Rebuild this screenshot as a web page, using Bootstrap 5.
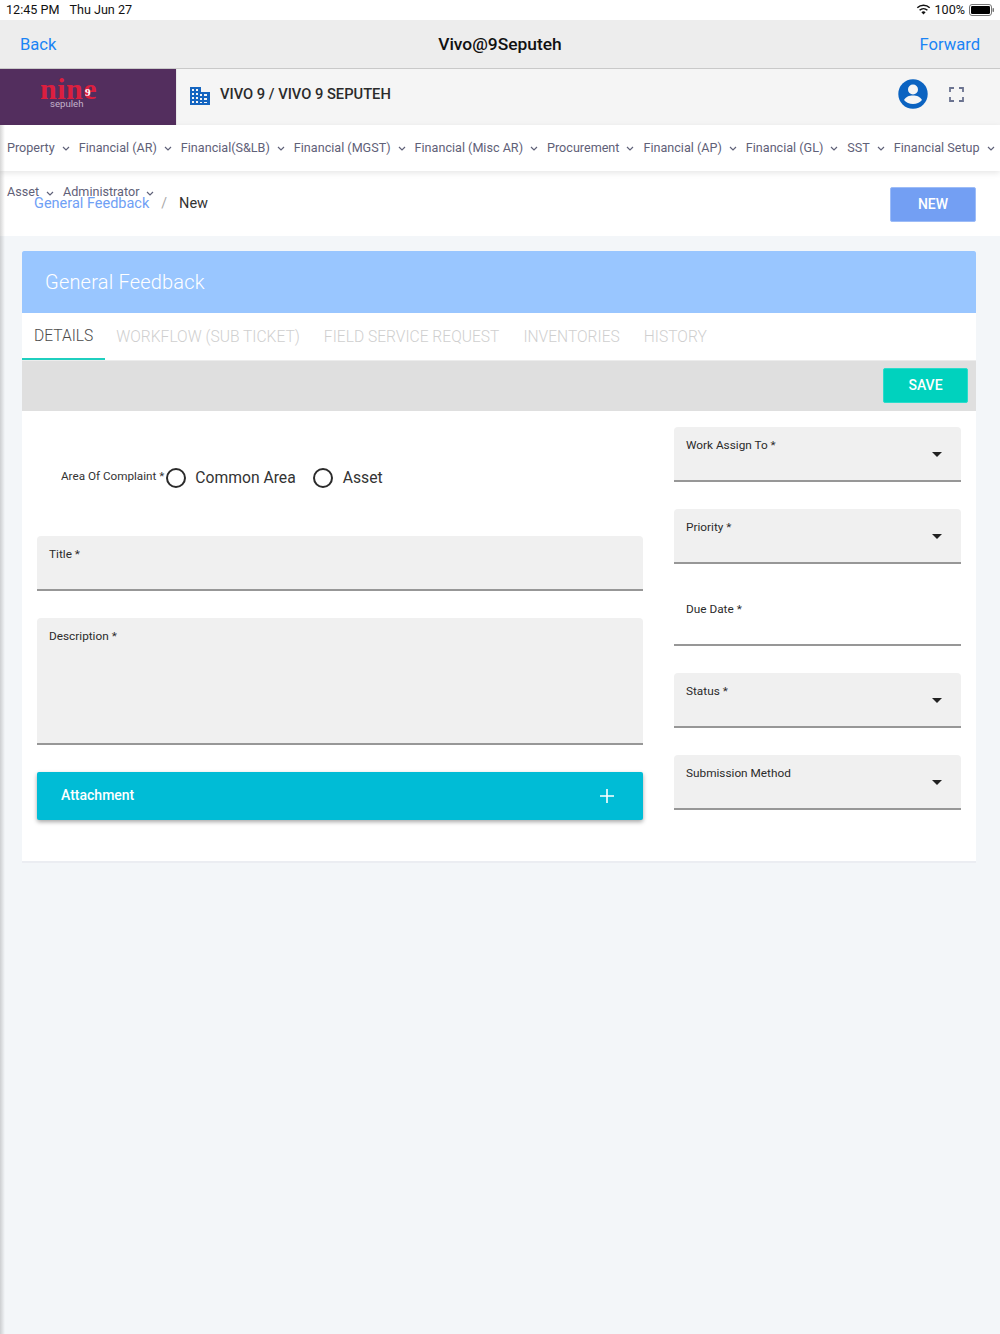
<!DOCTYPE html>
<html lang="en">
<head>
<meta charset="utf-8">
<title>General Feedback</title>
<link href="https://cdn.jsdelivr.net/npm/bootstrap@5.3.0/dist/css/bootstrap.min.css" rel="stylesheet">
<style>
html,body{height:100%}
body{background:#f3f6f9;font-family:Roboto,"Liberation Sans",sans-serif;color:#212529;width:1000px;height:1334px;overflow:hidden;position:relative}
.edge-shade{position:absolute;left:0;top:125px;bottom:0;width:5px;background:linear-gradient(90deg,rgba(0,0,0,.16),rgba(0,0,0,0));pointer-events:none;z-index:5}
.status-bar{height:20px;background:#fff;font-size:12.6px;padding:0 5px 0 6px;color:#111}
.status-time{margin-right:10px}
.safari-bar{height:49px;background:#ededed;border-bottom:1px solid #c9c9c9;padding:2px 20px 0;font-size:16.6px}
.safari-link{color:#1a84f5;text-decoration:none}
.safari-title{font-weight:500;font-size:17.4px;color:#111;position:absolute;left:0;right:0;top:14px;line-height:20px;text-align:center}
.top-head{height:56px;background:#f5f5f5}
.logo-box{width:177px;background:#532e5e;height:100%;position:relative;border-right:1px solid #e8e8e8;overflow:hidden}
.logo-word{position:absolute;left:40px;top:1px;font-family:"Liberation Serif",serif;font-size:30px;font-weight:700;color:#dc1f3f;line-height:38px;letter-spacing:.5px}
.logo-sub{position:absolute;left:50px;top:28px;font-size:9.6px;line-height:14px;color:#c3b2ca}
.logo-nine{position:absolute;left:85px;top:17px;font-family:"Liberation Serif",serif;font-size:11px;font-weight:700;color:#fff;line-height:12px}
.site-name{font-size:14.7px;font-weight:500;color:#2b2b2b;margin-left:10px;margin-top:-6px}
.site-icon{margin-left:13px;margin-top:-3px}
.head-tools{margin-left:auto;margin-right:36px;margin-top:-6px;gap:21px}
.menu-row{height:46px;background:#fff;padding:0 0 0 7px;box-shadow:0 2px 6px rgba(0,0,0,.1);position:relative;z-index:3;font-size:12.6px;color:#5f6178;white-space:nowrap;gap:9px}
.menu-item{display:inline-flex;align-items:center;gap:7px}
.menu-item svg{flex:none;margin-top:2px}
.menu-extra{position:absolute;left:7px;top:184px;z-index:4;font-size:12.6px;line-height:16px;color:#5f6178;gap:9px;white-space:nowrap}
.crumb-row{height:65px;background:#fff;padding:0 24px 0 34px;font-size:14.5px}
.crumb-link{color:#6fa0f5;text-decoration:none}
.crumb-sep{color:#a8a8a8;margin:0 12px;font-size:14px}
.crumb-now{color:#333}
.btn-new{width:86px;height:35px;background:#739ff3;color:#fff;font-size:14px;font-weight:500;border:1px solid #9dbcf7;border-radius:2px;padding:0;margin-top:1px}
.page-card{margin:15px 24px 0 22px;background:#fff;border-bottom:2px solid #ebedf2;height:612px}
.card-title-bar{height:62px;background:#99c6ff;color:#fff;font-size:20px;font-weight:300;padding-left:23px;letter-spacing:.2px;border-radius:2px 2px 0 0}
.tab-row{height:48px;background:#fff;font-size:15.6px;font-weight:300;color:#cfcfcf;border-bottom:1px solid #ececec}
.tab-cell{padding:2px 0 0;margin-right:24px;height:100%;display:flex;align-items:center}
.tab-cell.is-active{color:#4b4b4b;padding-left:12px;padding-right:12px;margin-right:11px;border-bottom:2px solid #1fcfbf}
.tool-row{height:50px;background:#dfdfdf;padding:0 8px 2px 0}
.btn-save{width:85px;height:35px;background:#00d2be;color:#fff;font-size:14px;font-weight:500;border:1px solid #2bdccb;border-radius:2px;padding:0}
.form-body{padding:16px 16px 0 15px;gap:31.5px}
.left-col{width:605.5px;flex:none}
.right-col{width:287px;flex:none}
.area-row{height:109px;padding:0 0 8px 24px;font-size:15.7px;color:#333}
.area-label{font-size:11.7px;color:#333;margin-top:-2px}
.radio-dot{width:20px;height:20px;border:2px solid #2b2b2b;border-radius:50%;display:inline-block;flex:none}
.radio-a{margin-left:2px;margin-right:9px}
.radio-b{margin-left:17px;margin-right:10px}
.fill-field{background:#f0f0f0;border-bottom:2px solid #979797;border-radius:4px 4px 0 0;height:55px;padding:10px 12px;font-size:11.8px;line-height:16px;color:#2b2b2b;margin-bottom:27px;position:relative}
.fill-field.is-plain{background:transparent}
.fill-field.is-tall{height:127px;margin-bottom:26.5px}
.caret-down{position:absolute;right:19px;top:25px;width:0;height:0;border-left:5px solid transparent;border-right:5px solid transparent;border-top:5px solid #222}
.attach-bar{background:#00bcd6;height:48px;color:#fff;font-size:14px;font-weight:500;padding:0 29px 0 24px;border-radius:2px;box-shadow:0 2px 4px rgba(0,0,0,.35)}
</style>
</head>
<body>
<div class="edge-shade"></div>

<div class="status-bar d-flex align-items-center">
  <span class="status-time">12:45 PM</span><span>Thu Jun 27</span>
  <span class="ms-auto d-flex align-items-center gap-1">
    <svg width="15" height="11" viewBox="0 0 15 11"><path d="M7.500 10.600 5.400 8.200a3.100 3.100 0 0 1 4.200 0Z" fill="#111"/><path d="M3.600 6.300a5.700 5.700 0 0 1 7.800 0" fill="none" stroke="#111" stroke-width="1.500"/><path d="M1.300 3.800a9 9 0 0 1 12.400 0" fill="none" stroke="#111" stroke-width="1.500"/></svg>
    <span>100%</span>
    <svg width="26" height="12" viewBox="0 0 26 12"><rect x=".5" y=".5" width="22" height="11" rx="2.500" fill="none" stroke="#777"/><rect x="2" y="2" width="19" height="8" rx="1.200" fill="#000"/><rect x="23.500" y="4" width="1.500" height="4" rx=".7" fill="#777"/></svg>
  </span>
</div>

<div class="safari-bar d-flex align-items-center justify-content-between position-relative">
  <a class="safari-link" href="#">Back</a>
  <span class="safari-title">Vivo@9Seputeh</span>
  <a class="safari-link position-relative" href="#">Forward</a>
</div>

<div class="top-head d-flex align-items-center">
  <div class="logo-box">
    <span class="logo-word">nine</span>
    <span class="logo-sub">sepuleh</span>
    <span class="logo-nine">9</span>
  </div>
  <svg class="site-icon" width="20" height="18" viewBox="0 0 20 18"><path fill="#1565c0" d="M0 0h11v5h9v13H0Z"/><g fill="#f5f5f5"><rect x="2" y="2" width="2" height="2"/><rect x="6" y="2" width="2" height="2"/><rect x="2" y="6" width="2" height="2"/><rect x="6" y="6" width="2" height="2"/><rect x="10" y="7" width="2" height="2"/><rect x="14" y="7" width="3" height="2"/><rect x="2" y="10" width="2" height="2"/><rect x="6" y="10" width="2" height="2"/><rect x="10" y="11" width="2" height="2"/><rect x="14" y="11" width="3" height="2"/><rect x="2" y="14" width="2" height="2"/><rect x="6" y="14" width="2" height="2"/><rect x="10" y="15" width="2" height="1"/><rect x="14" y="15" width="3" height="1"/></g></svg>
  <span class="site-name">VIVO 9 / VIVO 9 SEPUTEH</span>
  <div class="head-tools d-flex align-items-center">
    <svg width="30" height="30" viewBox="0 0 30 30"><circle cx="15" cy="15" r="14.700" fill="#0b63c1"/><circle cx="15" cy="10.500" r="5" fill="#f5f5f5"/><path d="M6 21c1.600-3.400 5.200-4.600 9-4.600s7.400 1.200 9 4.600c-2.200 2.800-5.400 4-9 4s-6.800-1.200-9-4Z" fill="#f5f5f5"/></svg>
    <svg width="15" height="15" viewBox="0 0 15 15"><path d="M1 5V1h4M10 1h4v4M14 10v4h-4M5 14H1v-4" fill="none" stroke="#6b7390" stroke-width="1.800"/></svg>
  </div>
</div>

<div class="menu-row d-flex align-items-center">
  <span class="menu-item">Property <svg width="8" height="5" viewBox="0 0 8 5"><path d="m1 1 3 3 3-3" fill="none" stroke="#5f6178" stroke-width="1.200"/></svg></span>
  <span class="menu-item">Financial (AR) <svg width="8" height="5" viewBox="0 0 8 5"><path d="m1 1 3 3 3-3" fill="none" stroke="#5f6178" stroke-width="1.200"/></svg></span>
  <span class="menu-item">Financial(S&amp;LB) <svg width="8" height="5" viewBox="0 0 8 5"><path d="m1 1 3 3 3-3" fill="none" stroke="#5f6178" stroke-width="1.200"/></svg></span>
  <span class="menu-item">Financial (MGST) <svg width="8" height="5" viewBox="0 0 8 5"><path d="m1 1 3 3 3-3" fill="none" stroke="#5f6178" stroke-width="1.200"/></svg></span>
  <span class="menu-item">Financial (Misc AR) <svg width="8" height="5" viewBox="0 0 8 5"><path d="m1 1 3 3 3-3" fill="none" stroke="#5f6178" stroke-width="1.200"/></svg></span>
  <span class="menu-item">Procurement <svg width="8" height="5" viewBox="0 0 8 5"><path d="m1 1 3 3 3-3" fill="none" stroke="#5f6178" stroke-width="1.200"/></svg></span>
  <span class="menu-item">Financial (AP) <svg width="8" height="5" viewBox="0 0 8 5"><path d="m1 1 3 3 3-3" fill="none" stroke="#5f6178" stroke-width="1.200"/></svg></span>
  <span class="menu-item">Financial (GL) <svg width="8" height="5" viewBox="0 0 8 5"><path d="m1 1 3 3 3-3" fill="none" stroke="#5f6178" stroke-width="1.200"/></svg></span>
  <span class="menu-item">SST <svg width="8" height="5" viewBox="0 0 8 5"><path d="m1 1 3 3 3-3" fill="none" stroke="#5f6178" stroke-width="1.200"/></svg></span>
  <span class="menu-item">Financial Setup <svg width="8" height="5" viewBox="0 0 8 5"><path d="m1 1 3 3 3-3" fill="none" stroke="#5f6178" stroke-width="1.200"/></svg></span>
</div>

<div class="menu-extra d-flex">
  <span class="menu-item">Asset <svg width="8" height="5" viewBox="0 0 8 5"><path d="m1 1 3 3 3-3" fill="none" stroke="#5f6178" stroke-width="1.200"/></svg></span>
  <span class="menu-item">Administrator <svg width="8" height="5" viewBox="0 0 8 5"><path d="m1 1 3 3 3-3" fill="none" stroke="#5f6178" stroke-width="1.200"/></svg></span>
</div>

<div class="crumb-row d-flex align-items-center">
  <a class="crumb-link" href="#">General Feedback</a>
  <span class="crumb-sep">/</span>
  <span class="crumb-now">New</span>
  <button class="btn btn-new ms-auto" type="button">NEW</button>
</div>

<div class="page-card">
  <div class="card-title-bar d-flex align-items-center">General Feedback</div>
  <div class="tab-row d-flex">
    <div class="tab-cell is-active">DETAILS</div>
    <div class="tab-cell">WORKFLOW (SUB TICKET)</div>
    <div class="tab-cell">FIELD SERVICE REQUEST</div>
    <div class="tab-cell">INVENTORIES</div>
    <div class="tab-cell">HISTORY</div>
  </div>
  <div class="tool-row d-flex align-items-center justify-content-end">
    <button class="btn btn-save" type="button">SAVE</button>
  </div>
  <div class="form-body d-flex">
    <div class="left-col">
      <div class="area-row d-flex align-items-center">
        <span class="area-label">Area Of Complaint *</span>
        <span class="radio-dot radio-a"></span><span>Common Area</span>
        <span class="radio-dot radio-b"></span><span>Asset</span>
      </div>
      <div class="fill-field">Title *</div>
      <div class="fill-field is-tall">Description *</div>
      <div class="attach-bar d-flex align-items-center justify-content-between">
        <span>Attachment</span>
        <svg width="14" height="14" viewBox="0 0 14 14"><path d="M7 0v14M0 7h14" stroke="#fff" stroke-width="1.600"/></svg>
      </div>
    </div>
    <div class="right-col">
      <div class="fill-field">Work Assign To *<span class="caret-down"></span></div>
      <div class="fill-field">Priority *<span class="caret-down"></span></div>
      <div class="fill-field is-plain">Due Date *</div>
      <div class="fill-field">Status *<span class="caret-down"></span></div>
      <div class="fill-field">Submission Method<span class="caret-down"></span></div>
    </div>
  </div>
</div>

<script src="https://cdn.jsdelivr.net/npm/bootstrap@5.3.0/dist/js/bootstrap.bundle.min.js"></script>
</body>
</html>
